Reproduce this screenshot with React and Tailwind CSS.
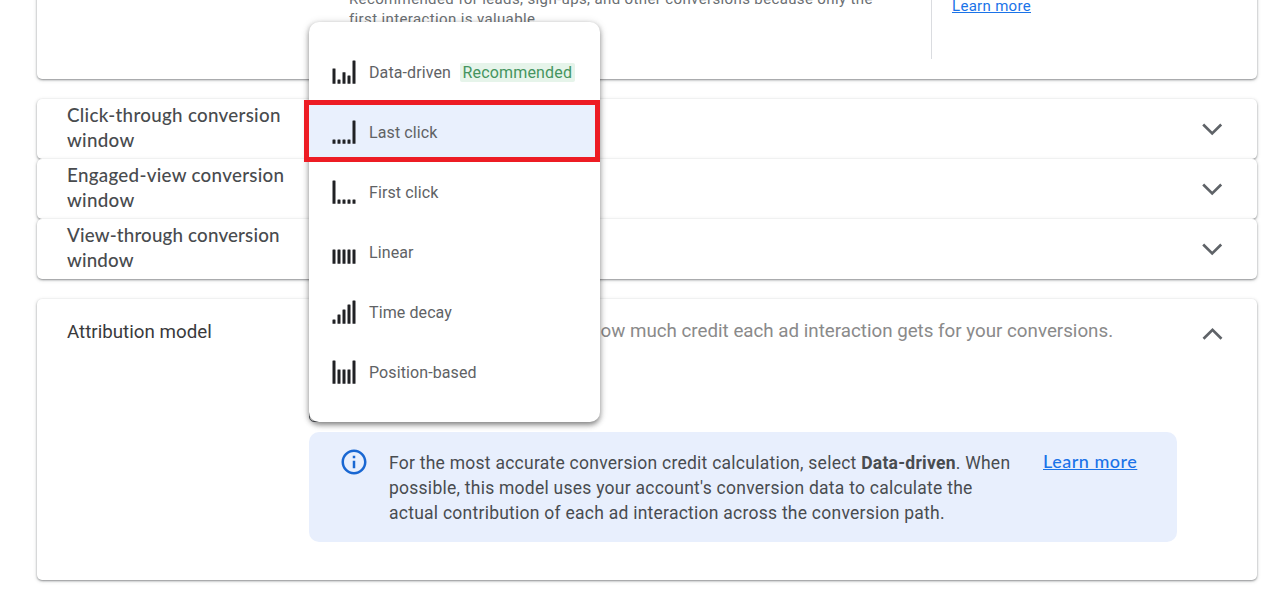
const cardShadow =
  "shadow-[0_1px_2px_0_rgba(60,64,67,0.5),0_1px_4px_0_rgba(60,64,67,0.18)]";
const card = `relative bg-white rounded-[5px] ${cardShadow}`;
const sans = "font-['Lato','Open_Sans',sans-serif]";

const models = [
  { name: "Data-driven", bars: [15.4, 4.2, 11.6, 8.2, 23.2], tag: "Recommended" },
  { name: "Last click", bars: [4.2, 4.2, 4.2, 4.2, 23.2], selected: true },
  { name: "First click", bars: [23.2, 4.2, 4.2, 4.2, 4.2] },
  { name: "Linear", bars: [14.2, 14.2, 14.2, 14.2, 14.2] },
  { name: "Time decay", bars: [4.2, 9.2, 14.2, 19.2, 23.2] },
  { name: "Position-based", bars: [23.2, 14.4, 14.4, 14.4, 23.2] },
];

function Bars({ heights }) {
  return (
    <svg width="24" height="24" viewBox="0 0 24 24" fill="#202124" className="shrink-0">
      {heights.map((h, i) => (
        <rect key={i} x={0.5 + i * 5} y={23.8 - h} width="3" height={h} rx="0.4" />
      ))}
    </svg>
  );
}

function Chevron({ up }) {
  return (
    <svg width="30" height="30" viewBox="0 0 30 30" fill="none" stroke="#5f6368" strokeWidth="2.7" className="shrink-0">
      <path d={up ? "M6.5 19.7l9-8.9 9 8.9" : "M6.2 10.5l9 8.9 9-8.9"} />
    </svg>
  );
}

function WindowRow({ first, track }) {
  return (
    <section className={`${card} flex h-[60px] items-center justify-between pl-[30px] pr-[30px]`}>
      <div className={`${sans} -mt-[4px] text-[18.75px] font-medium leading-[25px] ${track} text-[#484b4e] whitespace-nowrap`}>
        {first} conversion
        <br />
        window
      </div>
      <Chevron />
    </section>
  );
}

function Menu() {
  return (
    <div className="absolute left-[309px] top-[22px] z-10 w-[291px] rounded-[10px] bg-white py-5 shadow-[0_2.5px_5px_-1.25px_rgba(0,0,0,0.3),0_3px_6px_0_rgba(0,0,0,0.2),0_1px_9px_0_rgba(0,0,0,0.16)]">
      {models.map((m) => (
        <div key={m.name} className={`relative flex h-[60px] items-center pl-[23px] ${m.selected ? "bg-[#e9f0fd]" : ""}`}>
          <Bars heights={m.bars} />
          <span className="ml-[13px] whitespace-nowrap pt-px text-[16px] leading-6 tracking-[0.1px] text-[#606265]">{m.name}</span>
          {m.tag && (
            <span className="ml-[9px] h-[19px] rounded-[2px] bg-[#e6f4ea] px-[2.5px] text-[16px] leading-[19px] tracking-[0.17px] text-[#45945f]">
              {m.tag}
            </span>
          )}
          {m.selected && <div className="absolute -left-[5px] right-0 -top-[2px] h-[62px] border-[5px] border-[#ed1c24]" />}
        </div>
      ))}
    </div>
  );
}

export default function App() {
  return (
    <div className="relative h-[602px] w-[1287px] overflow-hidden bg-white pl-[37px] pr-[30px] font-['Roboto',sans-serif]">
      <section className={`${card} -mt-5 flex h-[99px] pl-[312px]`}>
        <div className="w-[582px] pt-[9px] text-[15px] leading-5 tracking-[0.37px] text-[#6a6e72] whitespace-nowrap">
          Recommended for leads, sign-ups, and other conversions because only the
          <br />
          first interaction is valuable.
        </div>
        <div className="h-[79px] border-l border-[#dadce0] pl-5 pt-4">
          <a className="block text-[15px] leading-5 tracking-[0.31px] text-[#1a73e8] underline">Learn more</a>
        </div>
      </section>

      <div className="mt-5">
        <WindowRow first="Click-through" track="tracking-[0.3px]" />
        <WindowRow first="Engaged-view" track="tracking-[0.3px]" />
        <WindowRow first="View-through" track="tracking-[0.17px]" />
      </div>

      <section className={`${card} mt-5 h-[281px] pl-[30px]`}>
        <div className="flex h-[60px] items-start pt-5 pr-[30px]">
          <h2 className="w-[242px] shrink-0 pt-[1px] text-[18.75px] leading-[25px] text-[#3a3a3c]">Attribution model</h2>
          <p className="flex-1 whitespace-nowrap text-[18.75px] leading-[25px] text-[#8a8a8a]">
            <span className="tracking-[-0.03px]">The attribution model determines </span>
            how much credit each ad interaction gets for your conversions.
          </p>
          <Chevron up />
        </div>
        <div className="mb-[10px] ml-[242px] h-[63px] w-[280px] rounded-[5px] border border-[#5f6368]" />
        <div className="ml-[242px] flex h-[110px] w-[868px] items-start rounded-[10px] bg-[#e8effd] pl-[30px] pt-[15px]">
          <svg width="30" height="30" viewBox="0 0 24 24" fill="#1967d2">
            <path d="M11 7h2v2h-2zm0 4h2v6h-2zm1-9C6.48 2 2 6.48 2 12s4.48 10 10 10 10-4.48 10-10S17.52 2 12 2zm0 18c-4.41 0-8-3.59-8-8s3.59-8 8-8 8 3.59 8 8-3.59 8-8 8z" />
          </svg>
          <p className="ml-5 mt-[4px] w-[654px] whitespace-nowrap text-[17.5px] leading-[25px] tracking-[0.25px] text-[#484c50]">
            For the most accurate conversion credit calculation, select <b>Data-driven</b>. When
            <br />
            possible, this model uses your account's conversion data to calculate the
            <br />
            actual contribution of each ad interaction across the conversion path.
          </p>
          <a className={`${sans} mt-[2px] text-[18px] font-medium leading-[25px] tracking-[0.5px] text-[#1a73e8] underline`}>Learn more</a>
        </div>
      </section>

      <Menu />
    </div>
  );
}
